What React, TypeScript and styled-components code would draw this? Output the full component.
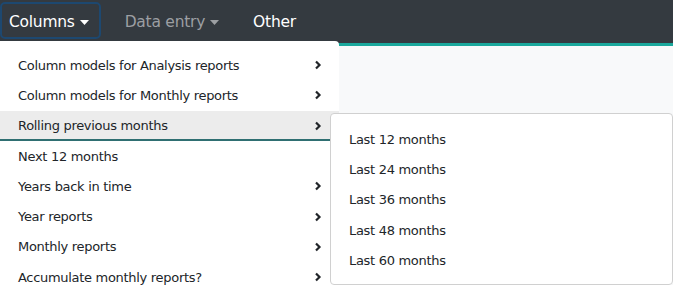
import styled, { createGlobalStyle } from 'styled-components';

const GlobalStyle = createGlobalStyle`
  body {
    margin: 0;
    background: #f8f9fa;
    font-family: Tahoma, "DejaVu Sans", sans-serif;
  }
`;

const mainItems = [
  { label: 'Column models for Analysis reports', sub: true },
  { label: 'Column models for Monthly reports', sub: true },
  { label: 'Rolling previous months', sub: true, active: true },
  { label: 'Next 12 months', sub: false },
  { label: 'Years back in time', sub: true },
  { label: 'Year reports', sub: true },
  { label: 'Monthly reports', sub: true },
  { label: 'Accumulate monthly reports?', sub: true },
];

const subItems = ['Last 12 months', 'Last 24 months', 'Last 36 months', 'Last 48 months', 'Last 60 months'];

const Chevron = () => (
  <svg width="8" height="10" viewBox="0 0 8 10">
    <polyline points="2,1.5 5.5,5 2,8.5" fill="none" stroke="#212529" strokeWidth="2.2" />
  </svg>
);

const Caret = () => (
  <svg width="9" height="5" viewBox="0 0 9 5">
    <polygon points="0,0 9,0 4.5,5" fill="currentColor" />
  </svg>
);

const App = () => {
  return (
    <>
      <GlobalStyle />
      <Page>
        <Navbar>
          <NavButton $focused $color="#ffffff">
            Columns <Caret />
          </NavButton>
          <NavButton $color="#9c9fa3">
            Data entry <Caret />
          </NavButton>
          <NavButton $color="#ffffff">Other</NavButton>
        </Navbar>
        <Content />
        <Menu>
          {mainItems.map((item) => (
            <MenuItem key={item.label} $active={item.active}>
              <span>{item.label}</span>
              {item.sub && <Chevron />}
            </MenuItem>
          ))}
        </Menu>
        <SubMenu>
          {subItems.map((s) => (
            <SubItem key={s}>{s}</SubItem>
          ))}
        </SubMenu>
      </Page>
    </>
  );
};

export default App;

const Page = styled.div`
  position: relative;
  width: 673px;
  height: 285px;
  overflow: hidden;
`;

const Navbar = styled.nav`
  background: #343a40;
  border-bottom: 3px solid #1aa89c;
  display: flex;
  align-items: center;
  box-sizing: border-box;
  height: 46px;
  padding-bottom: 3px;
`;

const NavButton = styled.div<{ $focused?: boolean; $color: string }>`
  display: flex;
  align-items: center;
  gap: 5px;
  height: 37px;
  box-sizing: border-box;
  padding: 3px ${(p) => (p.$focused ? '10px' : '15px')} 0 ${(p) => (p.$focused ? '7px' : '15px')};
  margin-right: ${(p) => (p.$focused ? '7px' : '0')};
  font-size: 15.5px;
  letter-spacing: -0.25px;
  color: ${(p) => p.$color};
  border: 2px solid ${(p) => (p.$focused ? '#1d4870' : 'transparent')};
  border-radius: 5px;
  svg {
    margin-top: 1px;
  }
`;

const Content = styled.div`
  height: 239px;
  background: #f8f9fa;
`;

const Menu = styled.div`
  position: absolute;
  left: 0;
  top: 41px;
  width: 339px;
  height: 260px;
  background: #ffffff;
  border-radius: 0 4px 0 0;
  padding-top: 9px;
  box-sizing: border-box;
`;

const MenuItem = styled.div<{ $active?: boolean }>`
  display: flex;
  align-items: center;
  justify-content: space-between;
  height: 30.3px;
  box-sizing: border-box;
  padding: 2px 17px 0 18px;
  font-size: 13px;
  letter-spacing: -0.3px;
  color: #212529;
  background: ${(p) => (p.$active ? '#ececec' : 'transparent')};
  border-bottom: 2px solid ${(p) => (p.$active ? '#2f6f72' : 'transparent')};
`;

const SubMenu = styled.div`
  position: absolute;
  left: 330px;
  top: 113px;
  width: 343px;
  height: 172px;
  box-sizing: border-box;
  background: #ffffff;
  border: 1px solid #d0d0d0;
  border-radius: 4px;
  padding-top: 10px;
`;

const SubItem = styled.div`
  display: flex;
  align-items: center;
  height: 30.3px;
  padding-left: 18px;
  font-size: 13px;
  letter-spacing: -0.3px;
  color: #212529;
`;
